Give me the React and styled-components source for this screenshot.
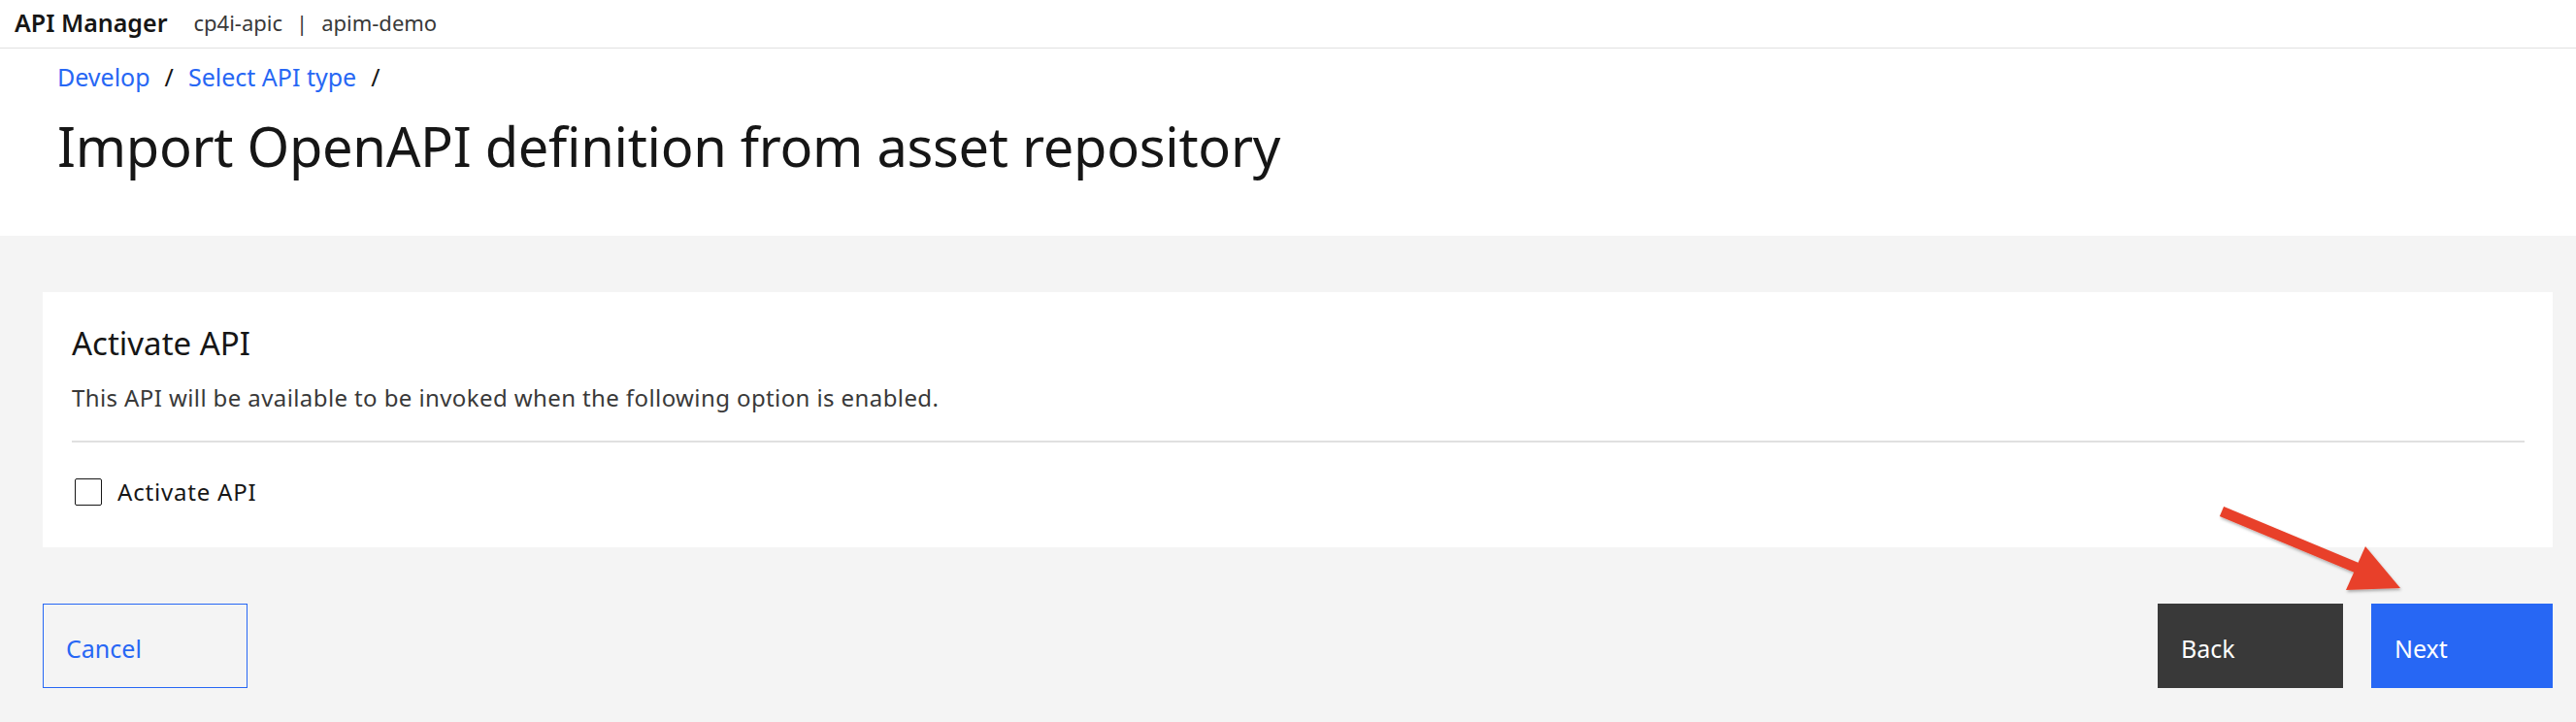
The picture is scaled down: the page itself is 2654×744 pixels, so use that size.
import React from "react";
import styled, { createGlobalStyle } from "styled-components";

const GlobalStyle = createGlobalStyle`
    html, body {
        margin: 0;
        padding: 0;
        background: #f4f4f4;
    }
    body {
        font-family: "Noto Sans", "Liberation Sans", sans-serif;
        color: #161616;
    }
`;

const blue = "#2767f4";

const App = () => {
    return (
        <>
            <GlobalStyle />
            <Page>
                <TopBar>
                    <Brand>API Manager</Brand>
                    <Context>cp4i-apic</Context>
                    <Pipe>|</Pipe>
                    <Context>apim-demo</Context>
                </TopBar>
                <PageHeader>
                    <Breadcrumb>
                        <Crumb>Develop</Crumb>
                        <Slash>/</Slash>
                        <Crumb>Select API type</Crumb>
                        <Slash>/</Slash>
                    </Breadcrumb>
                    <Title>Import OpenAPI definition from asset repository</Title>
                </PageHeader>
                <Main>
                    <Card>
                        <CardTitle>Activate API</CardTitle>
                        <CardText>
                            This API will be available to be invoked when the
                            following option is enabled.
                        </CardText>
                        <Divider />
                        <CheckRow>
                            <CheckBox />
                            <CheckLabel>Activate API</CheckLabel>
                        </CheckRow>
                    </Card>
                    <ButtonBar>
                        <Button $kind="ghost" $w={211}>
                            Cancel
                        </Button>
                        <Spacer />
                        <Button $kind="secondary" $w={191}>
                            Back
                        </Button>
                        <Button $kind="primary" $w={187}>
                            Next
                        </Button>
                    </ButtonBar>
                </Main>
                <Arrow viewBox="0 0 220 120" width="220" height="120">
                    <defs>
                        <filter id="shadow" x="-20%" y="-20%" width="140%" height="140%">
                            <feDropShadow dx="1" dy="2" stdDeviation="1.5" floodColor="#000" floodOpacity="0.3" />
                        </filter>
                    </defs>
                    <g filter="url(#shadow)" fill="#e8412a">
                        <line
                            x1="19"
                            y1="22"
                            x2="158"
                            y2="80"
                            stroke="#e8412a"
                            strokeWidth="11"
                        />
                        <polygon points="167,58 203,101 147,103" />
                    </g>
                </Arrow>
            </Page>
        </>
    );
};

export default App;

const Page = styled.div`
    position: relative;
    width: 2654px;
    min-height: 744px;
    background: #f4f4f4;
`;

const TopBar = styled.header`
    height: 50px;
    box-sizing: border-box;
    display: flex;
    align-items: center;
    padding: 0 0 3px 15px;
    background: #fff;
    border-bottom: 1px solid #e0e0e0;
`;

const Brand = styled.div`
    font-size: 25px;
    font-weight: 600;
    color: #161616;
    margin-right: 27px;
`;

const Context = styled.div`
    font-size: 22px;
    color: #393939;
`;

const Pipe = styled.div`
    font-size: 22px;
    color: #393939;
    margin: 0 14px;
`;

const PageHeader = styled.section`
    background: #fff;
    padding: 13px 0 59px 59px;
`;

const Breadcrumb = styled.nav`
    display: flex;
    align-items: center;
    height: 32px;
    font-size: 25px;
    line-height: 32px;
`;

const Crumb = styled.span`
    color: ${blue};
`;

const Slash = styled.span`
    color: #161616;
    margin: 0 15px;
`;

const Title = styled.h1`
    margin: 21px 0 0;
    font-size: 56px;
    line-height: 68px;
    font-weight: 400;
    letter-spacing: -0.3px;
    color: #161616;
`;

const Main = styled.main`
    padding: 58px 24px 34px 44px;
`;

const Card = styled.section`
    background: #fff;
    padding: 33px 29px 42px 30px;
`;

const CardTitle = styled.h2`
    margin: 0;
    font-size: 33px;
    line-height: 40px;
    font-weight: 400;
`;

const CardText = styled.p`
    margin: 20px 0 0;
    font-size: 24px;
    line-height: 31px;
    letter-spacing: 0.4px;
    color: #393939;
`;

const Divider = styled.hr`
    margin: 29px 0 0;
    border: 0;
    height: 2px;
    background: #e0e0e0;
`;

const CheckRow = styled.label`
    display: flex;
    align-items: center;
    gap: 16px;
    margin: 36px 0 0 3px;
    height: 30px;
`;

const CheckBox = styled.span`
    width: 28px;
    height: 28px;
    box-sizing: border-box;
    border: 1.5px solid #161616;
    border-radius: 2px;
    background: #fff;
`;

const CheckLabel = styled.span`
    font-size: 24px;
    line-height: 30px;
    letter-spacing: 0.8px;
    color: #161616;
`;

const ButtonBar = styled.div`
    display: flex;
    align-items: stretch;
    gap: 29px;
    margin-top: 58px;
    height: 87px;
`;

const Spacer = styled.div`
    flex: 1;
`;

const kinds = {
    ghost: `background: transparent; color: ${blue}; border: 1px solid ${blue};`,
    secondary: `background: #393939; color: #fff; border: 1px solid #393939;`,
    primary: `background: ${blue}; color: #fff; border: 1px solid ${blue};`,
};

const Button = styled.button`
    width: ${(p) => p.$w}px;
    box-sizing: border-box;
    display: flex;
    align-items: center;
    padding: 4px 0 0 23px;
    font-family: inherit;
    font-size: 25px;
    cursor: pointer;
    ${(p) => kinds[p.$kind]}
`;

const Arrow = styled.svg`
    position: absolute;
    left: 2270px;
    top: 505px;
    overflow: visible;
`;
